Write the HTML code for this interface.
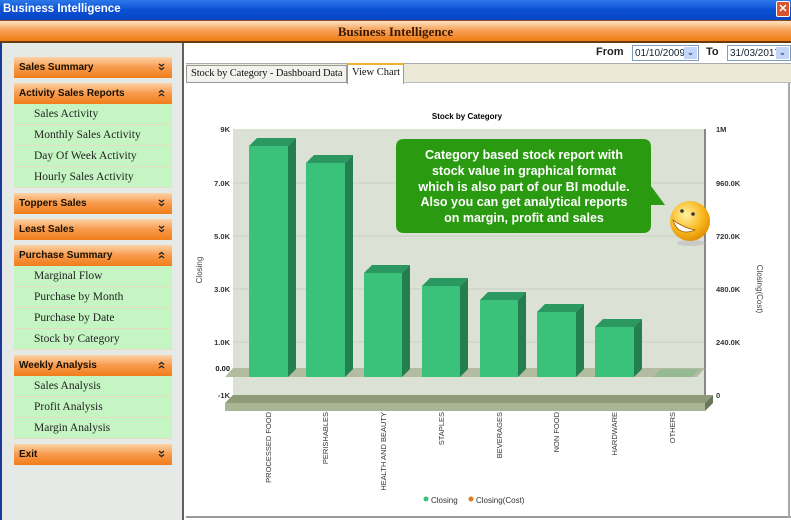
<!DOCTYPE html>
<html><head><meta charset="utf-8"><style>
*{margin:0;padding:0;box-sizing:border-box}
body{width:791px;height:520px;overflow:hidden;background:#fff;position:relative;font-family:"Liberation Sans",sans-serif}
.abs{position:absolute}
.tb{left:0;top:0;width:791px;height:20px;background:linear-gradient(#2d78e8,#0a4fd4 50%,#0846c4);color:#fff;font:bold 11.5px "Liberation Sans",sans-serif;padding:3px 0 0 3px}
.close{right:1px;top:1px;width:14px;height:16px;background:#d9532c;border:1px solid #fff;border-radius:2px;color:#fff;font:bold 11px sans-serif;text-align:center;line-height:14px}
.hdr{left:0;top:20px;width:791px;height:23px;background:linear-gradient(#fde3c4,#f8a15a 45%,#f07d12);border-top:1px solid #8a5020;border-bottom:2px solid #6a3a12;text-align:center;font:bold 13px "Liberation Serif",serif;color:#3a1a00;line-height:21px}
.side{left:0;top:43px;width:184px;height:477px;background:#e6eae6;border-left:2px solid #1a3a9a;border-right:2px solid #606060}
.mh{position:absolute;left:14px;width:158px;height:21px;background:linear-gradient(#fcd3a8,#f89a4c 50%,#f07d1a);font:bold 10px "Liberation Sans",sans-serif;color:#1a1000;padding:5px 0 0 5px;white-space:nowrap}
.mh svg{position:absolute;right:7px;top:6px}
.mi{position:absolute;left:14px;width:158px;height:21px;background:#c6f5c4;border-bottom:1px solid #e8dcc0;font:11.5px "Liberation Serif",serif;color:#222;padding:4px 0 0 20px;white-space:nowrap}
.lbl{font:bold 11px "Liberation Sans",sans-serif;color:#222}
.sel{height:16px;border:1px solid #7f9db9;background:#fff;font:10px "Liberation Sans",sans-serif;color:#123;padding:2px 0 0 2px;white-space:nowrap;overflow:hidden}
.sel b{position:absolute;right:1px;top:1px;width:13px;height:12px;background:#c4d6f8;color:#3050a0;font-size:8px;text-align:center;line-height:12px}
</style></head><body>
<div class="abs tb">Business Intelligence</div>
<div class="abs close">✕</div>
<div class="abs hdr">Business Intelligence</div>
<div class="abs side"></div>
<div class="mh" style="top:57px">Sales Summary<svg width="7" height="8"><path d="M1,1 L3.5,3 L6,1 M1,4.5 L3.5,6.5 L6,4.5" stroke="#222" stroke-width="1.3" fill="none"/></svg></div>
<div class="mh" style="top:83px">Activity Sales Reports<svg width="7" height="8"><path d="M1,3.5 L3.5,1.5 L6,3.5 M1,7 L3.5,5 L6,7" stroke="#222" stroke-width="1.3" fill="none"/></svg></div>
<div class="mi" style="top:104px">Sales Activity</div>
<div class="mi" style="top:125px">Monthly Sales Activity</div>
<div class="mi" style="top:146px">Day Of Week Activity</div>
<div class="mi" style="top:167px">Hourly Sales Activity</div>
<div class="mh" style="top:193px">Toppers Sales<svg width="7" height="8"><path d="M1,1 L3.5,3 L6,1 M1,4.5 L3.5,6.5 L6,4.5" stroke="#222" stroke-width="1.3" fill="none"/></svg></div>
<div class="mh" style="top:219px">Least Sales<svg width="7" height="8"><path d="M1,1 L3.5,3 L6,1 M1,4.5 L3.5,6.5 L6,4.5" stroke="#222" stroke-width="1.3" fill="none"/></svg></div>
<div class="mh" style="top:245px">Purchase Summary<svg width="7" height="8"><path d="M1,3.5 L3.5,1.5 L6,3.5 M1,7 L3.5,5 L6,7" stroke="#222" stroke-width="1.3" fill="none"/></svg></div>
<div class="mi" style="top:266px">Marginal Flow</div>
<div class="mi" style="top:287px">Purchase by Month</div>
<div class="mi" style="top:308px">Purchase by Date</div>
<div class="mi" style="top:329px">Stock by Category</div>
<div class="mh" style="top:355px">Weekly Analysis<svg width="7" height="8"><path d="M1,3.5 L3.5,1.5 L6,3.5 M1,7 L3.5,5 L6,7" stroke="#222" stroke-width="1.3" fill="none"/></svg></div>
<div class="mi" style="top:376px">Sales Analysis</div>
<div class="mi" style="top:397px">Profit Analysis</div>
<div class="mi" style="top:418px">Margin Analysis</div>
<div class="mh" style="top:444px">Exit<svg width="7" height="8"><path d="M1,1 L3.5,3 L6,1 M1,4.5 L3.5,6.5 L6,4.5" stroke="#222" stroke-width="1.3" fill="none"/></svg></div>

<div class="abs lbl" style="left:596px;top:46px">From</div>
<div class="abs sel" style="left:632px;top:45px;width:67px">01/10/2009<b>⌄</b></div>
<div class="abs lbl" style="left:706px;top:46px">To</div>
<div class="abs sel" style="left:727px;top:45px;width:64px">31/03/2017<b>⌄</b></div>
<div class="abs" style="left:186px;top:63px;width:605px;height:20px;background:#ece9d8;border-top:1px solid #aaa;border-bottom:1px solid #bbb"></div>
<div class="abs" style="left:186px;top:65px;width:161px;height:18px;border:1px solid #999;background:#f2f2ee;font:10.5px 'Liberation Serif',serif;padding:2px 0 0 4px;color:#111;white-space:nowrap;overflow:hidden;letter-spacing:-0.1px">Stock by Category - Dashboard Data</div>
<div class="abs" style="left:347px;top:63px;width:57px;height:21px;border-top:2px solid #f0b030;border-left:1px solid #999;border-right:1px solid #999;background:#fff;font:10.5px 'Liberation Serif',serif;padding:2px 0 0 4px;color:#111;white-space:nowrap">View Chart</div>
<div class="abs" style="left:186px;top:516px;width:605px;height:2px;background:#999"></div>
<div class="abs" style="left:788px;top:83px;width:2px;height:435px;background:#aaa"></div>

<svg class="abs" style="left:0;top:0" width="791" height="520" font-family="Liberation Sans,sans-serif">
<text x="467" y="119" font-size="8" font-weight="bold" text-anchor="middle">Stock by Category</text>
<rect x="233" y="129" width="472" height="266" fill="#dce1d6"/>
<g stroke="#c8cec2" stroke-width="1">
<line x1="233" y1="183" x2="705" y2="183"/><line x1="233" y1="236" x2="705" y2="236"/><line x1="233" y1="289" x2="705" y2="289"/><line x1="233" y1="342" x2="705" y2="342"/></g>
<line x1="705" y1="129" x2="705" y2="395" stroke="#888" stroke-width="2"/>
<polygon points="233,368 705,368 697,377 225,377" fill="#b3bba0"/>
<polygon points="233,395 713,395 705,403 225,403" fill="#8e9a78"/>
<rect x="225" y="403" width="480" height="8" fill="#a9b594"/>
<polygon points="705,403 713,395 713,403 705,411" fill="#6a7658"/>
<g fill="#3ac27a">
<rect x="249" y="146" width="39" height="231"/><rect x="306" y="163" width="39" height="214"/><rect x="364" y="273" width="38" height="104"/><rect x="422" y="286" width="38" height="91"/><rect x="480" y="300" width="38" height="77"/><rect x="537" y="312" width="39" height="65"/><rect x="595" y="327" width="39" height="50"/></g>
<g fill="#2a9860">
<polygon points="249,146 257,138 296,138 288,146"/><polygon points="306,163 314,155 353,155 345,163"/><polygon points="364,273 372,265 410,265 402,273"/><polygon points="422,286 430,278 468,278 460,286"/><polygon points="480,300 488,292 526,292 518,300"/><polygon points="537,312 545,304 584,304 576,312"/><polygon points="595,327 603,319 642,319 634,327"/></g>
<g fill="#237e50">
<polygon points="288,146 296,138 296,369 288,377"/><polygon points="345,163 353,155 353,369 345,377"/><polygon points="402,273 410,265 410,369 402,377"/><polygon points="460,286 468,278 468,369 460,377"/><polygon points="518,300 526,292 526,369 518,377"/><polygon points="576,312 584,304 584,369 576,377"/><polygon points="634,327 642,319 642,369 634,377"/></g>
<polygon points="653,377 661,369 700,369 692,377" fill="#95b990"/>
<g font-size="7.5" font-weight="bold" fill="#333" text-anchor="end">
<text x="230" y="132">9K</text><text x="230" y="186">7.0K</text><text x="230" y="239">5.0K</text><text x="230" y="292">3.0K</text><text x="230" y="345">1.0K</text><text x="230" y="371" fill="#111">0.00</text><text x="230" y="398">-1K</text></g>
<g font-size="7.5" font-weight="bold" fill="#333">
<text x="716" y="132">1M</text><text x="716" y="186">960.0K</text><text x="716" y="239">720.0K</text><text x="716" y="292">480.0K</text><text x="716" y="345">240.0K</text><text x="716" y="398">0</text></g>
<text transform="translate(202,270) rotate(-90)" font-size="8" fill="#444" text-anchor="middle">Closing</text>
<text transform="translate(757,289) rotate(90)" font-size="8" fill="#444" text-anchor="middle">Closing(Cost)</text>
<g font-size="7.5" fill="#333" text-anchor="end">
<text transform="translate(271,412) rotate(-90)">PROCESSED FOOD</text>
<text transform="translate(328,412) rotate(-90)">PERISHABLES</text>
<text transform="translate(386,412) rotate(-90)">HEALTH AND BEAUTY</text>
<text transform="translate(444,412) rotate(-90)">STAPLES</text>
<text transform="translate(502,412) rotate(-90)">BEVERAGES</text>
<text transform="translate(559,412) rotate(-90)">NON FOOD</text>
<text transform="translate(617,412) rotate(-90)">HARDWARE</text>
<text transform="translate(675,412) rotate(-90)">OTHERS</text></g>
<circle cx="426" cy="499" r="2.5" fill="#3ac27a"/><text x="431" y="503" font-size="8" fill="#333">Closing</text>
<circle cx="471" cy="499" r="2.5" fill="#e07a20"/><text x="476" y="503" font-size="8" fill="#333">Closing(Cost)</text>
<path d="M404,139 H643 Q651,139 651,147 V186 L665,205 L651,205 V225 Q651,233 643,233 H404 Q396,233 396,225 V147 Q396,139 404,139 Z" fill="#2a9a10"/>
<g fill="#fff" font-size="12.5" font-weight="bold" text-anchor="middle">
<text x="524" y="159">Category based stock report with</text>
<text x="524" y="175">stock value in graphical format</text>
<text x="524" y="191">which is also part of our BI module.</text>
<text x="524" y="206">Also you can get analytical reports</text>
<text x="524" y="222">on margin, profit and sales</text></g>
<defs><radialGradient id="sm" cx="0.4" cy="0.35" r="0.7"><stop offset="0" stop-color="#fff2a0"/><stop offset="0.6" stop-color="#f8b820"/><stop offset="1" stop-color="#e08a00"/></radialGradient></defs>
<ellipse cx="691" cy="243" rx="14" ry="3" fill="#bbb" opacity="0.6"/>
<circle cx="690" cy="221" r="20" fill="url(#sm)"/>
<circle cx="682" cy="211" r="1.8" fill="#333"/><circle cx="693" cy="214" r="1.8" fill="#333"/>
<path d="M673,220 Q678,237 695,230 Q684,228 673,220 Z" fill="#fff" stroke="#a06000" stroke-width="0.8"/>
</svg>
</body></html>
